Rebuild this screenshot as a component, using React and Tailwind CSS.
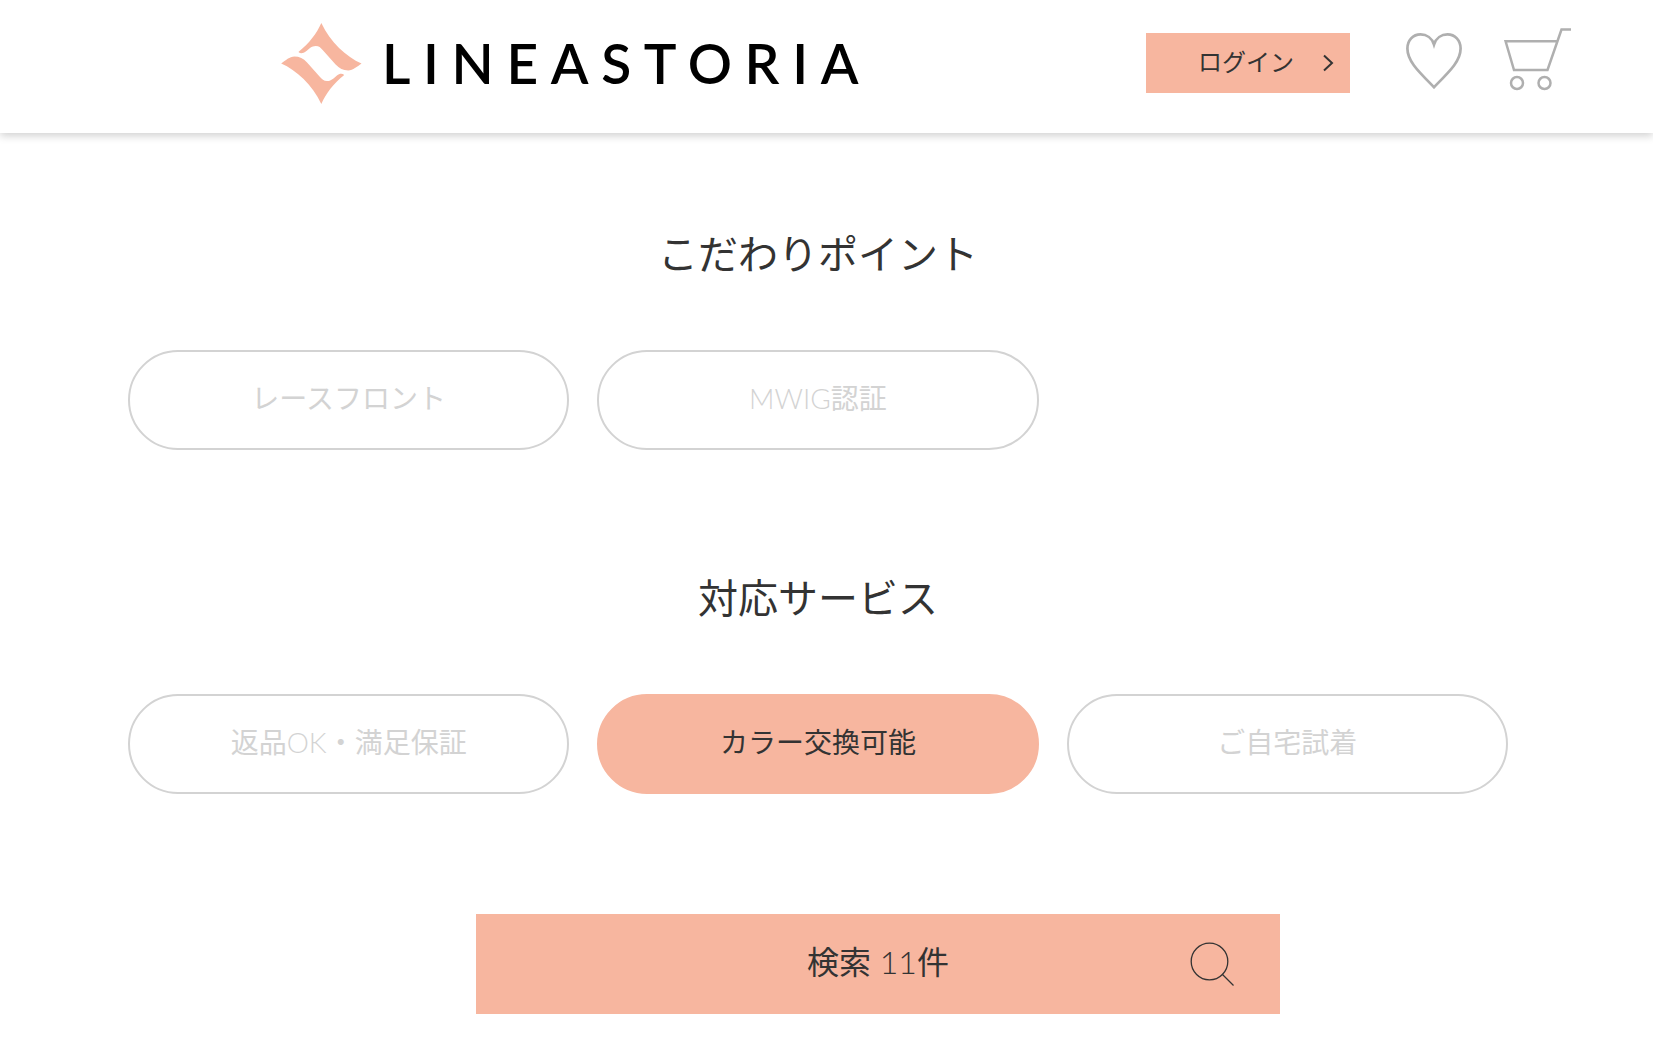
import React, { useState } from 'react';

const LogoMark = () => (
  <svg className="w-[81px] h-[81px] shrink-0" viewBox="66 68 243 244" fill="#f7b69f" aria-hidden="true">
    <path d="M187 68C173 99 151 129 118 155C124 161 132 160 140 154C149 146 158 137 170 137C180 137 185 142 191 149L230 193C241 205 253 211 268 211C283 210 294 200 308 190C262 170 214 126 187 68Z" />
    <path d="M187 312C201 281 223 251 256 225C250 219 242 220 234 226C225 234 216 243 204 243C194 243 189 238 183 231L144 187C133 175 121 169 106 169C91 170 80 180 66 190C112 210 160 254 187 312Z" />
  </svg>
);

const HeartIcon = () => (
  <svg className="w-14 h-14" viewBox="0 0 56 56" fill="none" stroke="#afafaf" strokeWidth="2.7" aria-hidden="true">
    <path d="M28 11.5C26 5 20.5 1.4 14.5 1.4C7 1.4 1.4 7.5 1.4 15.5C1.4 28 12 38 28 54.2C44 38 54.6 28 54.6 15.5C54.6 7.5 49 1.4 41.5 1.4C35.5 1.4 30 5 28 11.5Z" />
  </svg>
);

const CartIcon = () => (
  <svg className="w-[67px] h-[63px]" viewBox="0 0 67 63" fill="none" stroke="#afafaf" strokeWidth="2.5" aria-hidden="true">
    <path d="M67 1.5H57.5L43.5 42H10L1.6 13.3H53.5" />
    <circle cx="13" cy="55" r="6" />
    <circle cx="40.5" cy="55" r="6" />
  </svg>
);

const SearchIcon = () => (
  <svg className="w-11 h-11" viewBox="0 0 44 44" fill="none" stroke="#333" strokeWidth="1.3" aria-hidden="true">
    <circle cx="19.5" cy="19.5" r="18.3" />
    <path d="M32 32L43.5 43.5" />
  </svg>
);

const groups = [
  {
    title: 'こだわりポイント',
    options: ['レースフロント', 'MWIG認証'],
  },
  {
    title: '対応サービス',
    options: ['返品OK・満足保証', 'カラー交換可能', 'ご自宅試着'],
  },
];

const FilterPill = ({ label, checked, onChange }) => (
  <label
    className={`relative flex items-center justify-center h-[100px] pb-1 rounded-full border-2 text-[28px] leading-10 cursor-pointer ${
      checked ? 'bg-[#f7b69f] border-[#f7b69f] text-[#333]' : 'border-[#d3d3d3] text-[#d3d3d3]'
    }`}
  >
    <input
      type="checkbox"
      checked={checked}
      onChange={onChange}
      className="absolute inset-0 w-full h-full opacity-0 cursor-pointer"
    />
    <span>{label}</span>
  </label>
);

const Header = () => (
  <header className="flex items-center justify-between h-[133px] pl-[17%] pr-[82px] bg-white shadow-[0_3px_8px_rgba(0,0,0,0.18)]">
    <a href="#" className="flex items-center gap-5 pb-1.5">
      <LogoMark />
      <span className="font-[Lato] font-semibold text-[55px] leading-none tracking-[0.23em] text-black">LINEASTORIA</span>
    </a>
    <div className="flex items-center pb-2">
      <a href="#" className="flex items-center justify-end gap-7 w-[204px] h-[60px] pr-4 bg-[#f7b69f] text-2xl">
        <span className="pb-0.5">ログイン</span>
        <svg className="w-3 h-[18px]" viewBox="0 0 12 18" fill="none" stroke="#333" strokeWidth="2" aria-hidden="true">
          <path d="M2 1.5L10 9L2 16.5" />
        </svg>
      </a>
      <a href="#" aria-label="お気に入り" className="ml-14 pb-1">
        <HeartIcon />
      </a>
      <a href="#" aria-label="カート" className="ml-[42px] pb-1.5">
        <CartIcon />
      </a>
    </div>
  </header>
);

export default function App() {
  const [selected, setSelected] = useState(['カラー交換可能']);

  const toggle = (option) => {
    setSelected((prev) => (prev.includes(option) ? prev.filter((o) => o !== option) : [...prev, option]));
  };

  return (
    <div className="bg-white text-[#333] font-['Lato_Light','Noto_Sans_CJK_JP',sans-serif]">
      <Header />
      <main className="pt-[91px] pb-8 pr-[17px]">
        <form className="max-w-[1380px] mx-auto" onSubmit={(e) => e.preventDefault()}>
          {groups.map((group) => (
            <section key={group.title} className="mb-[118px]">
              <h2 className="text-center text-[40px] leading-[60px] mb-[66px]">{group.title}</h2>
              <div className="grid grid-cols-3 gap-7">
                {group.options.map((option) => (
                  <FilterPill
                    key={option}
                    label={option}
                    checked={selected.includes(option)}
                    onChange={() => toggle(option)}
                  />
                ))}
              </div>
            </section>
          ))}

          {/* Search button with result count */}
          <div className="flex justify-center pt-0.5 pl-[120px]">
            <button
              type="submit"
              className="relative w-full max-w-[804px] h-[100px] pb-1 bg-[#f7b69f] text-[32px] leading-12 cursor-pointer"
            >
              検索 11件
              <span className="absolute right-[46px] top-7">
                <SearchIcon />
              </span>
            </button>
          </div>
        </form>
      </main>
    </div>
  );
}
